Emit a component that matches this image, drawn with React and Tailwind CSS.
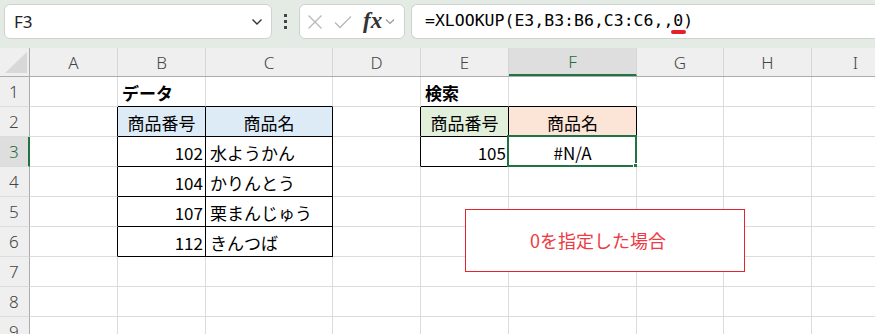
import React from 'react';

const COLS = [
  { key: 'A', w: 'w-[88px]' },
  { key: 'B', w: 'w-[88px]' },
  { key: 'C', w: 'w-[127px]' },
  { key: 'D', w: 'w-[88px]' },
  { key: 'E', w: 'w-[88px]' },
  { key: 'F', w: 'w-[128px]' },
  { key: 'G', w: 'w-[87px]' },
  { key: 'H', w: 'w-[88px]' },
  { key: 'I', w: 'w-[88px]' },
];

// 表の範囲（黒い罫線）
const TABLES = [
  { c1: 1, c2: 2, r1: 2, r2: 6 },
  { c1: 4, c2: 5, r1: 2, r2: 3 },
];

const inTable = (c, r) => TABLES.some(t => c >= t.c1 && c <= t.c2 && r >= t.r1 && r <= t.r2);

const CELLS = {
  'B1': { text: 'データ', bold: true },
  'B2': { text: '商品番号', align: 'center', bg: 'bg-[#ddebf7]' },
  'C2': { text: '商品名', align: 'center', bg: 'bg-[#ddebf7]' },
  'B3': { text: '102', align: 'right' },
  'C3': { text: '水ようかん' },
  'B4': { text: '104', align: 'right' },
  'C4': { text: 'かりんとう' },
  'B5': { text: '107', align: 'right' },
  'C5': { text: '栗まんじゅう' },
  'B6': { text: '112', align: 'right' },
  'C6': { text: 'きんつば' },
  'E1': { text: '検索', bold: true },
  'E2': { text: '商品番号', align: 'center', bg: 'bg-[#e2efda]' },
  'F2': { text: '商品名', align: 'center', bg: 'bg-[#fce4d6]' },
  'E3': { text: '105', align: 'right' },
  'F3': { text: '#N/A', align: 'center', selected: true },
};

const cellFont = { fontFamily: '"Noto Sans CJK JP", "Noto Sans", sans-serif' };

function Cell({ col, c, r }) {
  const data = CELLS[`${col.key}${r}`] || {};
  const blackRight = inTable(c, r) || inTable(c + 1, r);
  const blackBottom = inTable(c, r) || inTable(c, r + 1);
  const alignClass =
    data.align === 'right' ? 'justify-end pr-[2px]' : data.align === 'center' ? 'justify-center' : 'justify-start pl-[4px]';

  return (
    <div
      className={`relative ${col.w} shrink-0 h-[30px] flex items-center border-r border-b text-[17px] text-black ${alignClass} ${data.bg || 'bg-white'} ${blackRight ? 'border-r-black' : 'border-r-[#dcdcdc]'} ${blackBottom ? 'border-b-black' : 'border-b-[#dcdcdc]'} ${data.bold ? 'font-bold' : ''}`}
      style={cellFont}
    >
      <span className="leading-none whitespace-nowrap pt-[1px]">{data.text}</span>
      {data.selected && (
        <div className="absolute -left-[2px] -top-[2px] -right-[1px] -bottom-[1px] border-2 border-[#217346] pointer-events-none">
          <div className="absolute -right-[4px] -bottom-[4px] w-[6px] h-[6px] bg-[#217346] border border-white" />
        </div>
      )}
    </div>
  );
}

function Toolbar() {
  return (
    <div className="h-[48px] bg-[#e4ebe4] flex items-start pt-[4px] pl-[4px] gap-0">
      {/* 名前ボックス */}
      <div className="w-[268px] h-[35px] bg-white border border-[#cfd3cf] rounded-[6px] flex items-center justify-between pl-[9px] pr-[8px]">
        <span className="text-[17px] text-[#222]" style={{ fontFamily: '"Noto Sans", sans-serif' }}>F3</span>
        <svg width="12" height="8" viewBox="0 0 12 8" fill="none" stroke="#333" strokeWidth="1.4">
          <path d="M1.5 1.5 L6 6 L10.5 1.5" />
        </svg>
      </div>
      {/* 区切りの点 */}
      <div className="w-[27px] h-[35px] flex flex-col items-center justify-center gap-[3px]">
        <div className="w-[3px] h-[3px] bg-[#444]" />
        <div className="w-[3px] h-[3px] bg-[#444]" />
        <div className="w-[3px] h-[3px] bg-[#444]" />
      </div>
      {/* fx ボックス */}
      <div className="w-[106px] h-[35px] bg-white border border-[#cfd3cf] rounded-[6px] flex items-center pl-[7px] gap-[11px]">
        <svg width="16" height="16" viewBox="0 0 16 16" fill="none" stroke="#b8b8b8" strokeWidth="1.3">
          <path d="M1.5 1.5 L14.5 14.5 M14.5 1.5 L1.5 14.5" />
        </svg>
        <svg width="18" height="14" viewBox="0 0 18 14" fill="none" stroke="#b8b8b8" strokeWidth="1.3">
          <path d="M1 7.5 L6 12.5 L17 1.5" />
        </svg>
        <div className="flex items-center gap-[3px]">
          <span className="text-[23px] italic font-bold text-[#333] leading-none pb-[2px]" style={{ fontFamily: '"Liberation Serif", serif' }}>fx</span>
          <svg width="10" height="7" viewBox="0 0 10 7" fill="none" stroke="#999" strokeWidth="1.2">
            <path d="M1 1.5 L5 5.5 L9 1.5" />
          </svg>
        </div>
      </div>
      {/* 数式バー */}
      <div className="ml-[6px] flex-1 h-[35px] bg-white border border-r-0 border-[#cfd3cf] rounded-l-[6px] flex items-center pl-[13px]">
        <span className="relative text-[16.5px] text-black whitespace-nowrap" style={{ fontFamily: '"DejaVu Sans Mono", "Liberation Mono", monospace' }}>
          =XLOOKUP(E3,B3:B6,C3:C6,,
          <span className="relative">
            0
            <span className="absolute left-[-2px] right-[-3px] -bottom-[4px] h-[4px] rounded-full bg-[#e3202b]" />
          </span>
          )
        </span>
      </div>
    </div>
  );
}

function ColumnHeader() {
  return (
    <div className="flex h-[29px] bg-[#efefef] border-b border-[#acacac]">
      <div className="w-[30px] shrink-0 h-full border-r border-[#acacac] relative">
        <svg className="absolute left-[5px] top-[4px]" width="22" height="21" viewBox="0 0 22 21">
          <polygon points="22,0 22,21 0,21" fill="#d8d8d8" />
        </svg>
      </div>
      {COLS.map(col => {
        const sel = col.key === 'F';
        return (
          <div
            key={col.key}
            className={`${col.w} shrink-0 h-full flex items-center justify-center border-r border-[#d6d6d6] text-[17px] ${sel ? 'bg-[#dedede] text-[#1e6b40] border-b-2 border-b-[#217346]' : 'text-[#444]'}`}
            style={{ fontFamily: '"Noto Sans", sans-serif' }}
          >
            <span className="leading-none font-light">{col.key}</span>
          </div>
        );
      })}
    </div>
  );
}

function Row({ r }) {
  const sel = r === 3;
  return (
    <div className="flex">
      <div
        className={`w-[30px] shrink-0 h-[30px] flex items-center pl-[9px] border-b border-b-[#dcdcdc] text-[17px] ${sel ? 'bg-[#dedede] text-[#1e6b40] border-r-2 border-r-[#217346]' : 'bg-[#efefef] text-[#444] border-r border-r-[#acacac]'}`}
        style={{ fontFamily: '"Noto Sans", sans-serif' }}
      >
        <span className="leading-none font-light">{r}</span>
      </div>
      {COLS.map((col, i) => (
        <Cell key={col.key} col={col} c={i} r={r} />
      ))}
    </div>
  );
}

export default function App() {
  const rows = [1, 2, 3, 4, 5, 6, 7, 8, 9];
  return (
    <div className="w-[875px] h-[334px] overflow-hidden bg-white relative">
      <Toolbar />
      <div className="overflow-hidden">
        <ColumnHeader />
        {rows.map(r => (
          <Row key={r} r={r} />
        ))}
      </div>
      {/* テキストボックス（図形） */}
      <div className="absolute left-[465px] top-[209px] w-[280px] h-[63px] bg-white border border-[#e3262e] flex items-center justify-center pr-[14px]">
        <span className="text-[18px] text-[#ee3a43]" style={cellFont}>0を指定した場合</span>
      </div>
    </div>
  );
}
